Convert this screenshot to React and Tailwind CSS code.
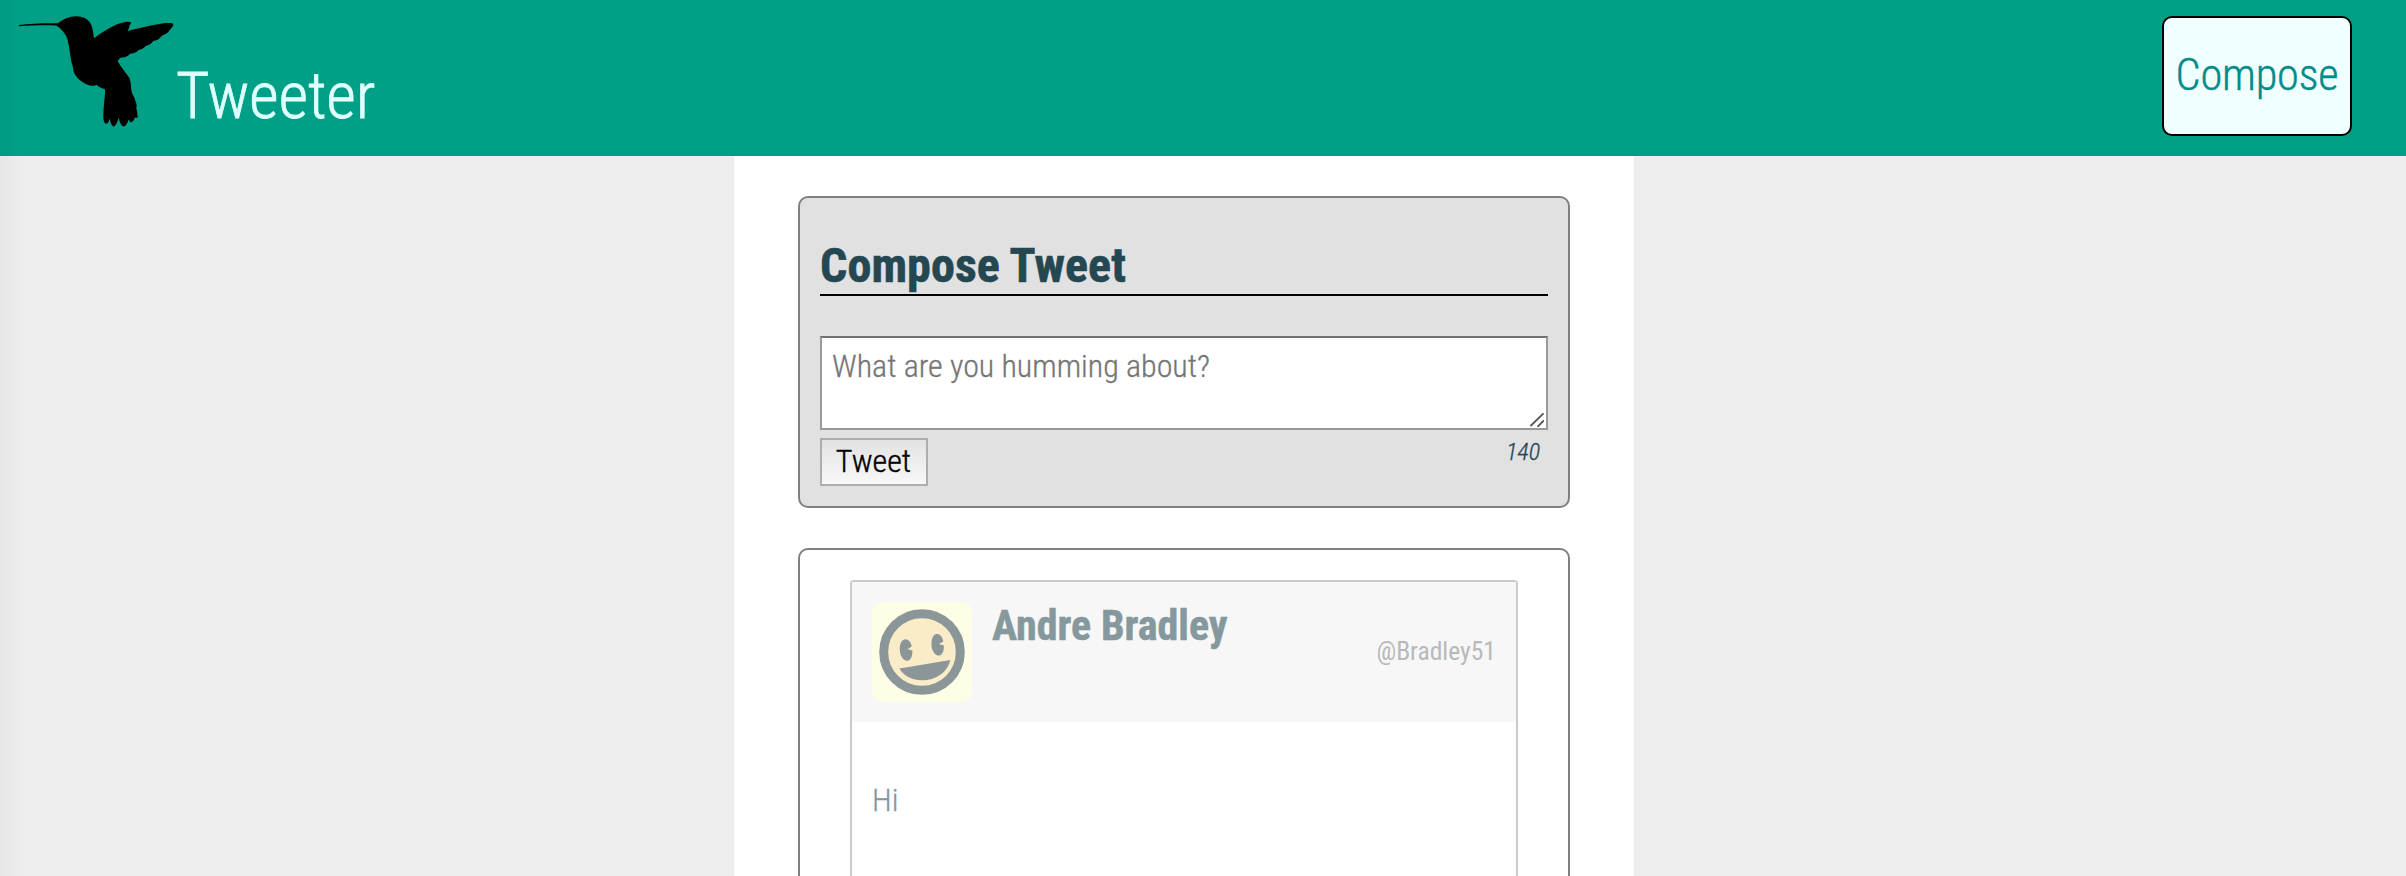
import React from "react";

function Hummingbird() {
  return (
    <svg viewBox="0 0 190 140" className="block h-[140px] w-[190px] shrink-0 -mr-[14px]">
      <path
        fill="#000"
        d="M19 25.100C30 23.500 44 22.900 58 23.200C63 19.500 69 16.300 76 16.300C84 16.200 89.500 20 91.500 25.500C93.200 30 93.300 34 94 38.300C101 33 111 26.500 120 23.300C124.500 21.600 129 21.200 131 22.300C131.200 24.500 128.500 26 129.300 27.500C128.800 29 128 29.800 127.500 31C138 28.500 149 25.800 158 24.300C164 23.200 169.500 22.600 172.800 23.400C174 24.500 172.800 26.800 171.300 28.300C168.500 31 168 33.500 164.500 34.500C163 35.500 162 35.500 161 36.800C159 39.500 156.500 40.500 153.500 40.800C152 43.500 149 45.300 145.500 46C144 48.300 141.500 49.500 138.500 50C137 52.500 133 53.800 130 53.800C128 56.500 124.500 57.800 121.500 57.500C119.500 58.500 118.500 59.500 117.700 61.300C120.500 66.500 125.500 72.500 129.500 78C131.200 83 131 88 131.800 92.500C133.500 96 135 98.500 135.800 102C136.800 104.500 137 106 136.200 108C137.300 111.500 137.400 114.500 137.800 117.300C136.500 118.300 135.500 117.500 134.500 117.800C134.300 120 133 122 131 122.300C129.800 122.200 129.500 120.500 128.500 119.500C127.800 123 125.500 126.300 123.500 126.600C121.500 126.300 119.500 122 118.600 117.500C118 121 116 125.800 113.700 126.500C111.500 126 110 121.500 109.700 118.200C109.200 121 108 123.500 106 123.700C103.800 123.300 103.200 119 103.300 115C103.500 106 105 97 105.200 89.500C102 88.300 98.500 87 96.500 84.700C95 85.800 93.500 86 91 85.800C84 84.500 76.500 78.500 73.700 72C73.200 68.500 72.700 65 71.500 62.500C70 55 69.500 47 67.500 39.500C66 34 60.500 27.800 56 25.600C44 25 31 25.500 19 26.300Z"
      />
    </svg>
  );
}

function Avatar() {
  return (
    <svg viewBox="0 0 100 100" className="block size-[100px] shrink-0">
      <rect width="100" height="100" rx="10" fill="#fefde6" />
      <circle cx="50" cy="50" r="38.300" fill="#faecc8" stroke="#8b9698" strokeWidth="9" />
      <g fill="#8b9698">
        <path d="M32.500 37.400C36 36.700 39 40 39.700 44.500L35.500 47.300L40.300 48.500C40.800 54 38.800 58.300 35.500 58.800C32 59.200 28.600 55 27.900 49.300C27.200 43.200 29 38 32.500 37.400Z" />
        <path d="M64.300 32C67.800 31.300 70.600 34.800 71.300 39.400L67 42L71.800 43.400C72.200 48.700 70.400 53 67.200 53.500C63.600 53.900 60.300 49.800 59.600 44.200C59 38 60.800 32.700 64.300 32Z" />
        <path d="M27.500 66.500L78.300 58C75.500 70.500 63.500 78.300 50 78.300C40.500 78.300 31.500 74 27.500 66.500Z" />
      </g>
    </svg>
  );
}

export default function App() {
  return (
    <div className="relative flex h-[876px] w-[2406px] flex-col overflow-hidden bg-[#eeeeee] font-['Roboto_Condensed','Roboto',sans-serif] font-light text-[#244751] [font-stretch:75%]">
      <header className="flex h-[156px] shrink-0 items-start justify-between bg-[#00a087] pr-[54px]">
        <div className="flex">
          <Hummingbird />
          <h1 className="pt-[65px] text-[64px] leading-[64px] text-[#e0ffff] [-webkit-text-stroke:0.8px]">Tweeter</h1>
        </div>
        <button className="mt-4 flex h-[120px] w-[190px] items-center justify-center rounded-[10px] border-2 border-black bg-[#f0ffff] pb-[1px] text-[44.4px] tracking-[-0.2px] text-[#008b8b] [-webkit-text-stroke:0.4px]">
          Compose
        </button>
      </header>

      <main className="ml-[734px] flex w-[900px] flex-1 flex-col bg-white px-16 pt-10">
        <section className="h-[312px] shrink-0 rounded-[10px] border-2 border-[#808080] bg-[#e1e1e1] px-5 pt-10">
          <h2 className="border-b-2 border-black text-[48px] leading-[56px] font-bold tracking-[0.08px] [-webkit-text-stroke:0.6px]">Compose Tweet</h2>
          <div className="relative mt-10">
            <textarea
              placeholder="What are you humming about?"
              className="block h-[94px] w-full resize-none border-2 border-[#999999] border-t-[#707070] bg-white px-[10px] pt-[9px] text-[32px] leading-[38px] placeholder:text-[#757575] [-webkit-text-stroke:0.3px]"
            />
            <svg viewBox="0 0 14 14" className="absolute right-1 bottom-[3px] size-[14px]" stroke="#555" strokeWidth="1.800" strokeLinecap="round">
              <path d="M1 12.500L13 0.800M8 13.300L13.300 8" />
            </svg>
          </div>
          <div className="mt-2 flex items-start justify-between">
            <button className="flex h-12 w-[108px] items-center justify-center border-2 border-[#adadad] bg-linear-to-b from-[#e2e2e2] to-[#f8f8f8] pr-[1px] pb-[3px] text-[32px] text-black [-webkit-text-stroke:0.4px]">
              Tweet
            </button>
            <span className="pr-2 text-[24px] leading-[28px] italic [-webkit-text-stroke:0.3px]">140</span>
          </div>
        </section>

        <section className="mt-10 h-[400px] shrink-0 rounded-[10px] border-2 border-[#808080] px-[50px] pt-[30px]">
          <article className="h-[400px] rounded-t-[4px] border-2 border-[#cbcbcb]">
            <header className="flex h-[140px] bg-[#f7f7f7] p-5">
              <Avatar />
              <h3 className="ml-5 text-[42px] leading-[48px] font-bold text-[#85989e] [-webkit-text-stroke:0.5px]">Andre Bradley</h3>
              <span className="ml-auto self-center pb-[2px] text-[25.6px] font-normal text-[#b9b9b9]">@Bradley51</span>
            </header>
            <p className="px-5 pt-[59px] text-[32px] leading-[38px] text-[#85989e] [-webkit-text-stroke:0.3px]">Hi</p>
          </article>
        </section>
      </main>
      <div className="pointer-events-none absolute inset-y-0 left-0 w-6 bg-linear-to-r from-black/3 to-transparent" />
    </div>
  );
}
